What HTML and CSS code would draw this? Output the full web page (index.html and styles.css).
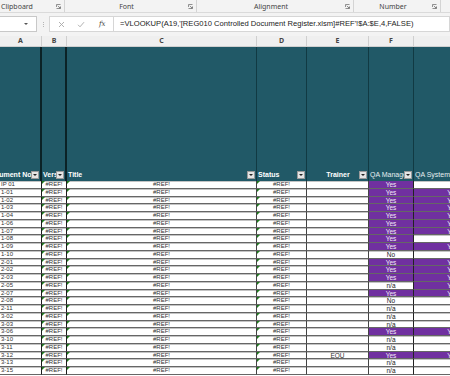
FILE: index.html
```html
<!DOCTYPE html>
<html>
<head>
  <link rel="stylesheet" href="styles.css">
</head>
<body>
  <div class="ribbon">
    <div class="group g-clip">
      <span class="group-label label-left">Clipboard</span>
      <span class="launcher"><svg width="5" height="5" viewBox="0 0 5 5"><path d="M0.5 3V0.5H4.5M0.5 4.5H4.5V2.5M1.8 1.8L4.2 4.2M4.2 2.8V4.2H2.8" fill="none" stroke="#777" stroke-width="0.8"/></svg></span>
    </div>
    <div class="group g-font">
      <span class="group-label">Font</span>
      <span class="launcher"><svg width="5" height="5" viewBox="0 0 5 5"><path d="M0.5 3V0.5H4.5M0.5 4.5H4.5V2.5M1.8 1.8L4.2 4.2M4.2 2.8V4.2H2.8" fill="none" stroke="#777" stroke-width="0.8"/></svg></span>
    </div>
    <div class="group g-align">
      <span class="group-label">Alignment</span>
      <span class="launcher"><svg width="5" height="5" viewBox="0 0 5 5"><path d="M0.5 3V0.5H4.5M0.5 4.5H4.5V2.5M1.8 1.8L4.2 4.2M4.2 2.8V4.2H2.8" fill="none" stroke="#777" stroke-width="0.8"/></svg></span>
    </div>
    <div class="group g-number">
      <span class="group-label">Number</span>
      <span class="launcher"><svg width="5" height="5" viewBox="0 0 5 5"><path d="M0.5 3V0.5H4.5M0.5 4.5H4.5V2.5M1.8 1.8L4.2 4.2M4.2 2.8V4.2H2.8" fill="none" stroke="#777" stroke-width="0.8"/></svg></span>
    </div>
  </div>

  <div class="formula-bar">
    <div class="name-box"><span class="caret"></span></div>
    <div class="grip"><span></span><span></span><span></span></div>
    <div class="fx-buttons">
      <svg class="fx-icon" width="7" height="7" viewBox="0 0 7 7"><path d="M1 1L6 6M6 1L1 6" stroke="#a8a8a8" stroke-width="0.9"/></svg>
      <svg class="fx-icon" width="8" height="7" viewBox="0 0 8 7"><path d="M1 3.8L3 5.8L7 1.2" fill="none" stroke="#a8a8a8" stroke-width="0.9"/></svg>
      <span class="fx-label">fx</span>
    </div>
    <div class="formula">=VLOOKUP(A19,'[REG010 Controlled Document Register.xlsm]#REF'!$A:$E,4,FALSE)</div>
  </div>

  <div class="col-heads">
    <div>A</div>
    <div>B</div>
    <div>C</div>
    <div>D</div>
    <div>E</div>
    <div>F</div>
    <div></div>
  </div>

  <div class="sheet">
    <div class="head-row">
      <div class="hcell"><span class="hlabel shift">Document No.</span><span class="filter"></span></div>
      <div class="hcell"><span class="hlabel">Version</span><span class="filter"></span></div>
      <div class="hcell"><span class="hlabel">Title</span><span class="filter"></span></div>
      <div class="hcell"><span class="hlabel">Status</span><span class="filter"></span></div>
      <div class="hcell"><span class="hlabel centered">Trainer</span><span class="filter"></span></div>
      <div class="hcell"><span class="hlabel light">QA Manager</span><span class="filter"></span></div>
      <div class="hcell"><span class="hlabel light">QA Systems</span></div>
    </div>
    <div id="rows"></div>
  </div>

  <script>
    // doc no, QA manager, QA systems purple?, trainer
    var rows = [
      ['IP 01', 'Yes', 0], ['1-01', 'Yes', 1], ['1-02', 'Yes', 1], ['1-03', 'Yes', 1],
      ['1-04', 'Yes', 1], ['1-06', 'Yes', 1], ['1-07', 'Yes', 1], ['1-08', 'Yes', 0],
      ['1-09', 'Yes', 1], ['1-10', 'No', 0], ['2-01', 'Yes', 1], ['2-02', 'Yes', 1],
      ['2-03', 'Yes', 1], ['2-05', 'n/a', 1], ['2-07', 'Yes', 1], ['2-08', 'No', 0],
      ['2-11', 'n/a', 0], ['3-02', 'n/a', 0], ['3-03', 'n/a', 0], ['3-06', 'Yes', 1],
      ['3-10', 'n/a', 0], ['3-11', 'n/a', 0], ['3-12', 'Yes', 1, 'EOU'], ['3-13', 'n/a', 0],
      ['3-15', 'n/a', 0]
    ];

    var html = '';
    rows.forEach(function(r) {
      var qa = r[1] === 'Yes' ? 'cell c-f yes' : 'cell c-f';
      var sys = r[2] ? 'cell c-g yes' : 'cell c-g';
      html += '<div class="row">' +
        '<div class="cell c-a">' + r[0] + '</div>' +
        '<div class="cell c-ref">#REF!</div>' +
        '<div class="cell c-ref">#REF!</div>' +
        '<div class="cell c-ref">#REF!</div>' +
        '<div class="cell c-e">' + (r[3] || '') + '</div>' +
        '<div class="' + qa + '">' + r[1] + '</div>' +
        '<div class="' + sys + '">' + (r[2] ? 'Yes' : '') + '</div>' +
        '</div>';
    });
    document.getElementById('rows').innerHTML = html;
  </script>
</body>
</html>
```

FILE: styles.css
```css
body {
  margin: 0;
  width: 450px;
  height: 376px;
  overflow: hidden;
  background: #fff;
  font-family: "Liberation Sans", Arial, sans-serif;
}

/* ribbon group captions */
.ribbon {
  display: flex;
  height: 12px;
  background: #f3f3f3;
  border-bottom: 1px solid #dadada;
}

.group {
  flex: none;
  display: flex;
  align-items: center;
  box-sizing: border-box;
  border-right: 1px solid #d4d4d4;
}

.g-clip { width: 65px; }
.g-font { width: 132px; }
.g-align { width: 157px; }
.g-number { width: 87px; }

.group-label {
  flex: 1;
  text-align: center;
  font-family: "Noto Sans", sans-serif;
  font-size: 7px;
  color: #444;
  white-space: nowrap;
}

.label-left {
  text-align: left;
  padding-left: 1px;
}

.launcher {
  display: flex;
  width: 5px;
  height: 5px;
  margin-right: 3px;
}

/* formula bar */
.formula-bar {
  display: flex;
  height: 23px;
  padding-top: 3px;
  box-sizing: border-box;
  background: #f3f3f3;
}

.name-box {
  position: relative;
  width: 37px;
  height: 16px;
  box-sizing: border-box;
  background: #fff;
  border: 1px solid #c8c8c8;
  border-left: none;
}

.caret {
  position: absolute;
  left: 24px;
  top: 6px;
  border-left: 2px solid transparent;
  border-right: 2px solid transparent;
  border-top: 2px solid #555;
}

.grip {
  width: 12px;
  display: flex;
  flex-direction: column;
  align-items: center;
  justify-content: center;
  gap: 1px;
  height: 16px;
}

.grip span {
  width: 1px;
  height: 1px;
  background: #b5b5b5;
}

.fx-buttons {
  width: 64px;
  height: 16px;
  box-sizing: border-box;
  display: flex;
  align-items: center;
  background: #fff;
  border: 1px solid #d6d6d6;
  border-right: none;
  padding-left: 8px;
  gap: 12px;
}

.fx-label {
  font-family: "DejaVu Serif", serif;
  font-style: italic;
  font-size: 7px;
  color: #444;
  margin-left: 2px;
}

.formula {
  flex: 1;
  height: 16px;
  box-sizing: border-box;
  background: #fff;
  border: 1px solid #d6d6d6;
  padding-left: 6px;
  font-family: "Liberation Sans", Arial, sans-serif;
  font-size: 7.6px;
  line-height: 14px;
  color: #222;
  white-space: nowrap;
  overflow: hidden;
}

/* column letters */
.col-heads,
.head-row,
.row {
  display: grid;
  grid-template-columns: 42px 25px 190px 50px 62px 45px 78px;
}

.col-heads {
  height: 11px;
  background: #efefef;
  border-bottom: 1px solid #d0d0d0;
  box-sizing: border-box;
}

.col-heads div {
  border-right: 1px solid #cfcfcf;
  text-align: center;
  font-family: "Noto Sans", sans-serif;
  font-size: 7px;
  font-weight: 700;
  line-height: 10px;
  color: #444;
}

/* sheet */
.head-row {
  height: 134px;
  background: #215967;
  align-items: end;
}

.hcell {
  display: flex;
  height: 100%;
  padding-bottom: 2px;
  box-sizing: border-box;
  border-right: 1px solid #113a43;
  align-items: flex-end;
  overflow: hidden;
}

.head-row .hcell:nth-child(1),
.head-row .hcell:nth-child(2) {
  border-right: 2px solid #0b2226;
}

.hlabel {
  flex: 1;
  min-width: 0;
  overflow: hidden;
  white-space: nowrap;
  color: #fff;
  font-size: 7px;
  font-weight: 700;
  line-height: 9px;
  padding-left: 1px;
}

.hlabel.shift {
  text-indent: -14px;
  padding-left: 0;
}

.hlabel.centered {
  text-align: center;
  padding-left: 10px;
}

.hlabel.light {
  font-weight: 400;
  color: #e6eef0;
}

.filter {
  position: relative;
  flex: none;
  width: 8px;
  height: 8px;
  margin-right: 1px;
  box-sizing: border-box;
  background: #e4e4e4;
  border: 1px solid #9a9a9a;
}

.filter::after {
  content: "";
  position: absolute;
  left: 1px;
  top: 2px;
  border-left: 2px solid transparent;
  border-right: 2px solid transparent;
  border-top: 2px solid #222;
}

.row {
  height: 7.75px;
}

.cell {
  position: relative;
  box-sizing: border-box;
  border-right: 1px solid #444;
  border-bottom: 1px solid #666;
  box-shadow: inset 0 1px 0 #c4c4c4;
  background: #fff;
  font-size: 6px;
  line-height: 7px;
  color: #333;
  white-space: nowrap;
  overflow: hidden;
}

.c-a {
  padding-left: 1px;
  border-right-color: #1c1c1c;
}

.row .cell:nth-child(2) {
  border-right-color: #1c1c1c;
}

.c-ref {
  text-align: center;
}

.c-ref::before {
  content: "";
  position: absolute;
  left: 0;
  top: 0;
  border-top: 3px solid #1f7a1f;
  border-right: 3px solid transparent;
}

.c-e {
  text-align: center;
  font-size: 6.5px;
}

.c-f {
  text-align: center;
  font-size: 6.5px;
  color: #222;
  border-right-color: #222;
}

.c-g {
  text-align: center;
  font-size: 6.5px;
}

.yes {
  background: #7030a0;
  box-shadow: none;
  color: #f2eaf8;
}
```
